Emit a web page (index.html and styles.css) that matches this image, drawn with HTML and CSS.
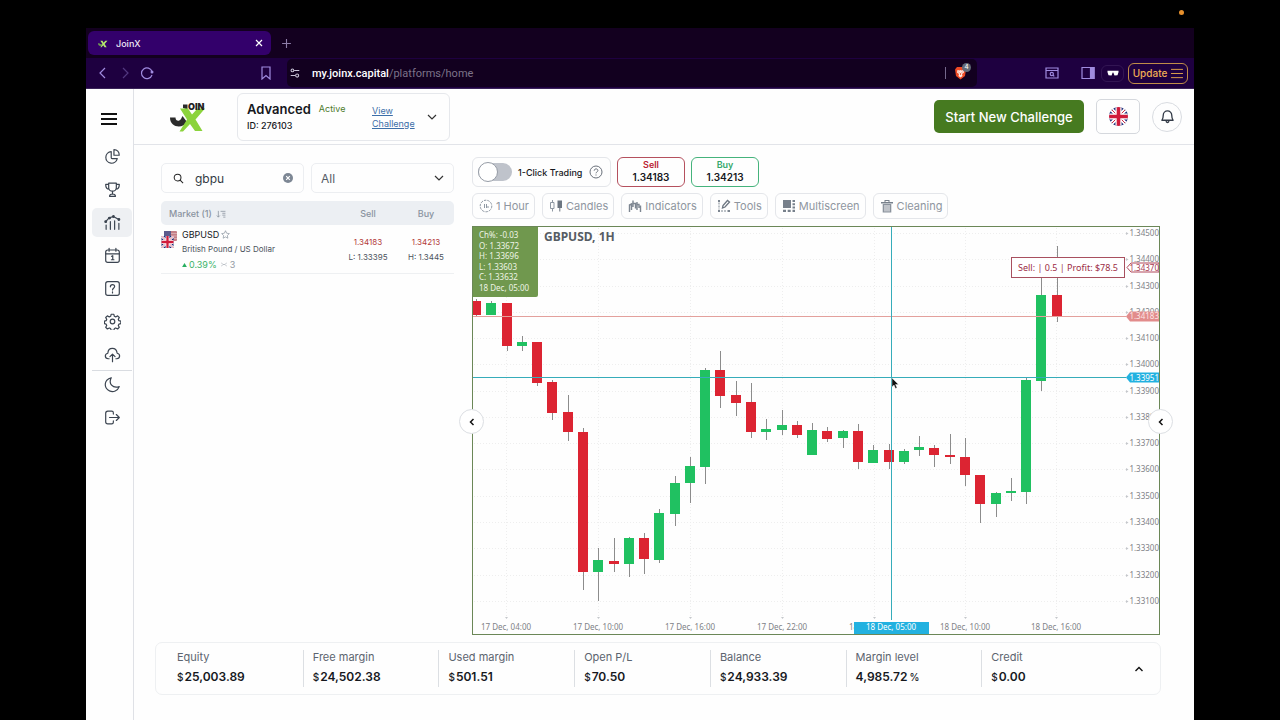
FILE: index.html
```html
<!DOCTYPE html>
<html lang="en">
<head>
<meta charset="utf-8">
<title>JoinX</title>
<link rel="stylesheet" href="styles.css">
</head>
<body>
<svg class="defs" width="0" height="0" aria-hidden="true">
  <symbol id="uk" viewBox="0 0 20 20">
    <rect width="20" height="20" fill="#1b2a78"/>
    <path d="M0 0l20 20M20 0L0 20" stroke="#fff" stroke-width="4"/>
    <path d="M0 0l20 20M20 0L0 20" stroke="#c8203c" stroke-width="1"/>
    <path d="M10 0v20M0 10h20" stroke="#fff" stroke-width="6.4"/>
    <path d="M10 0v20M0 10h20" stroke="#d01c3c" stroke-width="3.8"/>
  </symbol>
  <symbol id="logo-x" viewBox="0 0 38 30">
    <path d="M0 15.500h5.500c0 3.500 3.500 4.500 5.500 1.500l1.500-3L17 20C13 27 0 26 0 15.500z" fill="#2b2b2b"/>
    <path d="M13 2.500h4.500v5L13 6z" fill="#2b2b2b"/>
    <path d="M10 6.500h8l4 6 5.500-6H35L25.500 17.500l7 11.500H25l-5-7-7 7.500H9.500L17 17.500z" fill="#8bd33c"/>
  </symbol>
</svg>
<div class="camera-dot"></div>
<div class="window">
  <div class="tabs">
    <div class="tab">
      <svg class="favicon" viewBox="0 0 38 30"><path d="M0 14h6c0 4 4 5 6 2l4 5C11 27 0 25 0 14z" fill="#6d9a53"/><path d="M9 5h8l4 7 7-7h8L25 17l8 12h-8l-5-7-7 7H9l8-12z" fill="#b6ec6c"/></svg>
      <span>JoinX</span>
      <button class="tab-close" aria-label="Close tab"><svg viewBox="0 0 8 8"><path d="M1 1l6 6M7 1L1 7" stroke="#fff" stroke-width="1.200"/></svg></button>
    </div>
    <button class="tab-new" aria-label="New tab"><svg viewBox="0 0 10 10"><path d="M5 1v8M1 5h8" stroke="#8d7da8" stroke-width="1"/></svg></button>
  </div>
  <div class="toolbar">
    <button class="tool" aria-label="Back"><svg viewBox="0 0 14 14"><path d="M9 2L4 7l5 5"/></svg></button>
    <button class="tool dim" aria-label="Forward"><svg viewBox="0 0 14 14"><path d="M5 2l5 5-5 5"/></svg></button>
    <button class="tool" aria-label="Reload"><svg viewBox="0 0 14 14"><path d="M12 5.500A5.400 5.400 0 1 0 12 9"/><circle cx="12" cy="6" r="1.500" fill="#a08be0" stroke="none"/></svg></button>
    <button class="tool bookmark" aria-label="Bookmark"><svg viewBox="0 0 14 14"><path d="M3 1h8v12l-4-3.500L3 13z"/></svg></button>
    <div class="address">
      <svg viewBox="0 0 14 14"><g fill="none" stroke="#c9c2d6" stroke-width="1.200"><circle cx="4" cy="4" r="1.600"/><path d="M6 4h6M2 10h5"/><circle cx="9.500" cy="10" r="1.800"/></g></svg>
      <p><b>my.joinx.capital</b>/platforms/home</p>
      <span class="bar"></span>
      <span class="shield"><svg viewBox="0 0 12 14"><path d="M2.500 1h7l2 2.500-1 6.500L6 13.500 1.500 10l-1-6.500z" fill="#ee4a25"/><path d="M3 4l2 .5L6 4l1 .5L9 4l.5 2.500L7.500 8 8 10l-2 1.500L4 10l.5-2L2.500 6.500z" fill="#fbe8e2"/><path d="M4 6l1 .8M8 6l-1 .8M6 7v2" stroke="#ee4a25" stroke-width=".8"/></svg><i>4</i></span>
    </div>
    <button class="tool find" aria-label="Search page"><svg viewBox="0 0 14 14"><path d="M1 2h12v10H1zM1 4.500h12"/><circle cx="6.800" cy="8" r="1.600"/><path d="M8 9.200l1.300 1.200"/></svg></button>
    <button class="tool side" aria-label="Side panel"><svg viewBox="0 0 14 14"><path d="M1 1.500h12v11H1z"/><path d="M9.500 1.500H13v11H9.500z" fill="#a08be0"/></svg></button>
    <span class="private"><svg viewBox="0 0 12 6"><path d="M.5.700h11v1.500l-1 3-3 .3L6.300 2.500h-.6L4.500 5.500l-3-.3-1-3z" fill="#fff"/></svg></span>
    <button class="update">Update<svg viewBox="0 0 13 12"><path d="M0 1.500h13M0 6h13M0 10.500h13" stroke="#e9a84c" stroke-width="1"/></svg></button>
  </div>

  <div class="app">
    <nav class="sidebar" aria-label="Main">
      <button class="burger" aria-label="Menu"><svg viewBox="0 0 16 14"><path d="M0 2h16M0 7h16M0 12h16" stroke="#111" stroke-width="2"/></svg></button>
      <a href="#" aria-label="Overview"><svg viewBox="0 0 20 20"><path d="M8.500 4.300A6.800 6.800 0 1 0 15.600 12.500H9.500a1 1 0 0 1-1-1z"/><path d="M11.700 2v6.500h6.200C18 4.500 15.500 2 11.700 2z"/></svg></a>
      <a href="#" aria-label="Challenges"><svg viewBox="0 0 20 20"><path d="M5.500 2.500h9v5c0 6-9 6-9 0zM5.500 4H2c0 3.500 1 5.500 4.200 5.700M14.500 4H18c0 3.500-1 5.500-4.200 5.700M10 12v3.500M6.500 18c0-2 1-2.700 3.500-2.700s3.500.700 3.500 2.700z"/></svg></a>
      <a href="#" class="active" aria-label="Trading"><svg viewBox="0 0 20 20"><path d="M2 9l4-4.500 5-1.500 6.500 3.500"/><path d="M2.500 13v5M7.500 9v9M12.500 8v10M17.500 11v7"/><g fill="#3b4450"><circle cx="2" cy="9" r="1"/><circle cx="6.500" cy="4.800" r="1"/><circle cx="11" cy="3" r="1"/><circle cx="17.500" cy="6.500" r="1"/></g></svg></a>
      <a href="#" aria-label="Calendar"><svg viewBox="0 0 20 20"><rect x="2" y="3.500" width="16" height="14.500" rx="2.500"/><path d="M2 8h16M6 1.500V5M14 1.500V5M9 11l1.300-.8V15M8.700 15h3"/></svg></a>
      <a href="#" aria-label="Help"><svg viewBox="0 0 20 20"><rect x="2" y="2" width="16" height="16" rx="2.500"/><path d="M7.500 8c0-3.500 5-3.200 5-.3 0 2-2.500 2-2.500 4M10 14v1.200"/></svg></a>
      <a href="#" aria-label="Settings"><svg viewBox="0 0 20 20"><circle cx="10" cy="10" r="2.700"/><path d="M8.400 1.500h3.200l.6 2.400 1.600.7 2.200-1.300 2 2-1.200 2.200.7 1.500 2.300.6v2.900l-2.300.6-.7 1.500 1.200 2.200-2 2-2.200-1.200-1.600.7-.6 2.200H8.400l-.6-2.200-1.600-.7L4 18.800l-2-2 1.200-2.200-.7-1.500-2-.6V9.600l2-.6.7-1.500L2 5.300l2-2 2.200 1.300 1.600-.7z"/></svg></a>
      <a href="#" aria-label="Upload"><svg viewBox="0 0 20 20"><path d="M6 15H5C.5 14.500.5 9.500 4.500 8.500 5 1 14.500 1 15.500 8.500c4 1 3.800 6-.5 6.500h-1M10 18.500V10M7 12.500l3-3 3 3"/></svg></a>
      <hr>
      <a href="#" aria-label="Dark mode"><svg viewBox="0 0 20 20"><path d="M8.500 2C5 9 10 15 18 12.500 16 17.500 11 19.500 6.500 17.500-.5 14-.5 4.500 8.500 2z"/></svg></a>
      <a href="#" aria-label="Log out"><svg viewBox="0 0 20 20"><path d="M11 6V4.500c0-1.500-.7-2-2-2H4.500c-1.700 0-2.500.8-2.500 2.500v10c0 1.700.8 2.500 2.500 2.500H9c1.300 0 2-.5 2-2V14M6.500 10H18M14.500 6.500L18 10l-3.500 3.500"/></svg></a>
    </nav>

    <div class="page">
      <header class="header">
        <svg class="logo" viewBox="0 0 38 30" role="img" aria-label="JoinX"><use href="#logo-x"/><text x="18" y="8">OIN</text></svg>
        <section class="account">
          <div class="account-main">
            <p class="plan"><strong>Advanced</strong><span>Active</span></p>
            <p class="account-id">ID: 276103</p>
          </div>
          <a href="#">View Challenge</a>
          <button aria-label="Switch account"><svg class="chev" viewBox="0 0 10 6"><path d="M1 1l4 4 4-4"/></svg></button>
        </section>
        <button class="start">Start New Challenge</button>
        <button class="lang" aria-label="Language"><svg viewBox="0 0 20 20"><use href="#uk"/></svg></button>
        <button class="bell" aria-label="Notifications"><svg viewBox="0 0 16 16"><path d="M3.500 6.500a4.500 4.500 0 0 1 9 0c0 3 .5 4 1.500 5.500H2c1-1.500 1.500-2.500 1.500-5.500zM6.500 12.500c0 2.500 3 2.500 3 0"/></svg></button>
      </header>

      <main class="workspace">
        <section class="market">
          <div class="filters">
            <label class="search"><svg viewBox="0 0 12 12"><circle cx="5" cy="5" r="3.700"/><path d="M7.800 7.800L11 11"/></svg>
              <input type="text" value="gbpu" aria-label="Search market">
              <button aria-label="Clear"><svg viewBox="0 0 10 10"><circle cx="5" cy="5" r="5" fill="#7d8794"/><path d="M3.200 3.200l3.600 3.600M6.800 3.200L3.200 6.800" stroke="#fff" stroke-width="1.200"/></svg></button>
            </label>
            <label class="select"><select aria-label="Category"><option>All</option></select><svg class="chev" viewBox="0 0 10 6"><path d="M1 1l4 4 4-4"/></svg></label>
          </div>
          <table>
            <thead><tr><th>Market (1) <svg viewBox="0 0 11 9"><path d="M2.500 1v7M.8 6.200L2.500 8l1.700-1.800M5 1.500h5.500M7 3.700h3.500M7 5.800h3.500M8 8h2.500" fill="none" stroke="#8a93a0" stroke-width=".9"/></svg></th><th>Sell</th><th>Buy</th></tr></thead>
            <tbody><tr>
              <td><div class="pair">
                <svg class="flags" viewBox="0 0 16 17"><rect x="3" width="13" height="10" rx="1" fill="#c47f88"/><path d="M3 2.500h13M3 5h13M3 7.500h13" stroke="#d8a9ae" stroke-width="1"/><rect x="3" width="7" height="6" fill="#5b5a8c"/><use href="#uk" x="0" y="5" width="13" height="12"/></svg>
                <div><p class="symbol">GBPUSD<svg viewBox="0 0 10 10"><path d="M5 .8l1.300 2.800 3 .4-2.200 2.100.5 3L5 7.700 2.400 9.100l.5-3L.7 4l3-.4z" fill="none" stroke="#7d8794" stroke-width=".7"/></svg></p>
                <p class="desc">British Pound / US Dollar</p>
                <p class="change"><svg viewBox="0 0 6 5"><path d="M3 0l3 5H0z" fill="#27ae60"/></svg><b>0.39%</b><svg class="spread" viewBox="0 0 6 5"><path d="M0 .5l2 2-2 2M6 .5l-2 2 2 2M2 2.500h2" fill="none" stroke="#b0b6be" stroke-width=".8"/></svg>3</p></div>
              </div></td>
              <td><p class="price">1.34183</p><p class="limit">L: 1.33395</p></td>
              <td><p class="price">1.34213</p><p class="limit">H: 1.3445</p></td>
            </tr></tbody>
          </table>
        </section>

        <section class="trading">
          <div class="row order-row">
            <div class="one-click"><input type="checkbox" id="oneclick" class="switch"><label for="oneclick">1-Click Trading</label><svg viewBox="0 0 14 14"><circle cx="7" cy="7" r="6"/><path d="M5.200 5.700c0-2.500 3.700-2.300 3.700-.2 0 1.400-1.900 1.400-1.900 2.800M7 9.500v1"/></svg></div>
            <button class="quote sell"><span>Sell</span>1.34183</button>
            <button class="quote buy"><span>Buy</span>1.34213</button>
          </div>
          <div class="row chart-tools">
            <button><svg viewBox="0 0 14 14"><circle cx="7" cy="7" r="5.800" fill="none" stroke="#8f98a3" stroke-dasharray="2.500 1"/><path d="M5.500 5v4M7.500 5v4M9 7v2" stroke="#8f98a3"/></svg>1 Hour</button>
            <button><svg viewBox="0 0 14 14"><path d="M3.500 1v2M3.500 10v2.500M1.500 3.500h3.500v6H1.500z" fill="none" stroke="#8f98a3"/><path d="M8.500 1.500h4.500v7.500h-1.700v3.500h-1V9H8.500z" fill="#6d7681"/></svg>Candles</button>
            <button><svg viewBox="0 0 14 14"><path d="M1.500 13V6l2-1v6M5 1.500V8M5 4.500h2.500v5M9 3v8M9 5.500h2V9M12.500 6.500v6.500" fill="none" stroke="#7d8691" stroke-width="1.400"/></svg>Indicators</button>
            <button><svg viewBox="0 0 14 14"><path d="M2 3.500v7M4 12h8" stroke="#7d8691" stroke-dasharray="2 1"/><path d="M1 1h2v2H1zM1 11h2v2H1zM11 11h2v2h-2z" fill="#7d8691"/><path d="M5.500 9L6 6.500 10.500 1.500l2 1.500L8 8z" fill="none" stroke="#6d7681" stroke-width="1.300"/></svg>Tools</button>
            <button><svg viewBox="0 0 14 14"><path d="M1 1h8v8H1zM10.500 1H13v2h-2.500zM10.500 4.200H13v2h-2.500zM10.500 7.400H13v2h-2.500zM1 10.700h3V13H1zM5.700 10.700h3V13h-3zM10.500 10.700H13V13h-2.500z" fill="#77808b"/></svg>Multiscreen</button>
            <button><svg viewBox="0 0 14 14"><path d="M1 3h12v1.500H1zM4.500 1h5v2h-1V2h-3v1h-1z" fill="#77808b"/><path d="M2.700 5h8.600v8.500H2.700z" fill="#8b939d"/><path d="M5 6v6.500M7 6v6.500M9 6v6.500" stroke="#fff" stroke-width=".9"/></svg>Cleaning</button>
          </div>
          <div class="chart-wrap">
            <svg class="chart" id="chart" viewBox="0 0 688 409" role="img" aria-label="GBPUSD, 1H candlestick chart"></svg>
            <button class="slide left" aria-label="Collapse market list"><svg viewBox="0 0 6 8"><path d="M4.500 1L1.500 4l3 3"/></svg></button>
            <button class="slide right" aria-label="Open order panel"><svg viewBox="0 0 6 8"><path d="M4.500 1L1.500 4l3 3"/></svg></button>
          </div>
        </section>
      </main>

      <footer class="stats">
        <dl>
          <div><dt>Equity</dt><dd><small>$</small>25,003.89</dd></div>
          <div><dt>Free margin</dt><dd><small>$</small>24,502.38</dd></div>
          <div><dt>Used margin</dt><dd><small>$</small>501.51</dd></div>
          <div><dt>Open P/L</dt><dd><small>$</small>70.50</dd></div>
          <div><dt>Balance</dt><dd><small>$</small>24,933.39</dd></div>
          <div><dt>Margin level</dt><dd>4,985.72<small class="unit">%</small></dd></div>
          <div><dt>Credit</dt><dd><small>$</small>0.00</dd></div>
        </dl>
        <button aria-label="Expand"><svg viewBox="0 0 10 6"><path d="M1.500 5L5 1.500 8.500 5"/></svg></button>
      </footer>
    </div>
  </div>
</div>
<script src="chart.js"></script>
</body>
</html>
```

FILE: chart.js
```js
// Plot geometry, in chart units.
const FIRST_X = 4, STEP = 15.28, BODY = 10;
const TOP_PRICE = 1.345, TOP_Y = 7, PER_LABEL = 26.27;

// direction, body top, body bottom, high, low
const candles = [
  ['d', 75, 89, 73, 91], ['u', 77, 89, 75, 89], ['d', 77, 120, 77, 125],
  ['u', 116, 120, 110, 125], ['d', 116, 157, 116, 160], ['d', 156, 187, 154, 194],
  ['d', 186, 206, 169, 215], ['d', 206, 346, 202, 364], ['u', 334, 346, 322, 375],
  ['d', 335, 338, 312, 346], ['u', 312, 338, 311, 351], ['d', 312, 333, 307, 348],
  ['u', 287, 334, 283, 337], ['u', 257, 288, 250, 300], ['u', 240, 257, 231, 277],
  ['u', 144, 241, 142, 258], ['d', 144, 170, 125, 182], ['d', 169, 177, 155, 190],
  ['d', 176, 206, 157, 212], ['u', 203, 206, 193, 214], ['u', 199, 204, 184, 209],
  ['d', 199, 209, 195, 212], ['u', 204, 229, 197, 229], ['d', 205, 213, 201, 216],
  ['u', 205, 212, 204, 222], ['d', 205, 236, 198, 243], ['u', 224, 237, 219, 237],
  ['d', 224, 236, 218, 243], ['u', 225, 236, 223, 238], ['u', 221, 224, 210, 230],
  ['d', 222, 229, 219, 241], ['d', 229, 231, 208, 238], ['d', 231, 249, 212, 260],
  ['d', 249, 278, 249, 297], ['u', 267, 278, 266, 291], ['u', 265, 267, 252, 275],
  ['u', 154, 266, 151, 278], ['u', 69, 155, 31, 165], ['d', 69, 91, 20, 96]
];
const times = [['17 Dec, 04:00', 34], ['17 Dec, 10:00', 126], ['17 Dec, 16:00', 218],
  ['17 Dec, 22:00', 310], ['18 Dec, 04:00', 402], ['18 Dec, 10:00', 493], ['18 Dec, 16:00', 584]];

const out = [];
const text = (x, y, s, cls, anchor) =>
  out.push(`<text x="${x}" y="${y}" class="${cls}" text-anchor="${anchor || 'start'}">${s}</text>`);
const line = (x1, y1, x2, y2, cls) =>
  out.push(`<path d="M${x1} ${y1}L${x2} ${y2}" class="${cls}"/>`);

for (let i = 0; i < 15; i++) {
  const y = Math.round(TOP_Y + i * PER_LABEL);
  line(2, y + 0.5, 654, y + 0.5, 'grid');
  out.push(`<path d="M654 ${y - 1}l2.500 1.500-2.500 1.500z" class="tick"/>`);
  text(687, y + 3, (TOP_PRICE - i / 1000).toFixed(5), 'axis', 'end');
}
for (const [label, x] of times) {
  line(x + 0.5, 2, x + 0.5, 392, 'grid');
  out.push(`<path d="M${x - 1} 391h3l-1.500 2z" class="tick"/>`);
  text(x, 404, label, 'axis', 'middle');
}
candles.forEach(([dir, top, bottom, high, low], i) => {
  const x = Math.round(FIRST_X + i * STEP);
  const left = Math.max(1, x - BODY / 2);
  line(x + 0.5, high, x + 0.5, low, 'wick');
  out.push(`<rect x="${left}" y="${top}" width="${x + BODY / 2 - left}" height="${bottom - top}" class="${dir === 'u' ? 'up' : 'down'}"/>`);
});

line(1, 90.5, 654, 90.5, 'last');
line(1, 151.5, 654, 151.5, 'crosshair');
line(419.5, 0, 419.5, 394, 'crosshair');
out.push('<path d="M654 90.500l4-5h29v10h-29z" class="tag-last"/>');
text(687, 93, '1.34183', 'axis light', 'end');
out.push('<path d="M654 151.500l4-5h29v10h-29z" class="tag-cross"/>');
text(687, 155, '1.33951', 'axis white', 'end');
out.push('<path d="M655 41.500l4-4.500h28v9h-28z" class="tag-order"/>');
text(687, 45, '1.34370', 'axis maroon', 'end');
out.push('<rect x="539.500" y="31.500" width="113" height="20" class="order"/>');
text(596, 45, 'Sell: | 0.5 | Profit: $78.5', 'order-text', 'middle');
out.push('<rect x="382" y="396" width="75" height="12" class="tag-cross"/>');
text(419, 404, '18 Dec, 05:00', 'axis white', 'middle');

out.push('<path d="M0 0h66v69q0 2-2 2H0z" class="ohlc"/>');
['Ch%: -0.03', 'O: 1.33672', 'H: 1.33696', 'L: 1.33603', 'C: 1.33632', '18 Dec, 05:00']
  .forEach((s, i) => text(7, 12 + Math.round(i * 10.5), s, 'ohlc-text'));
text(72, 15, 'GBPUSD, 1H', 'title');
out.push('<rect x="0.500" y="0.500" width="687" height="408" class="frame"/>');
out.push('<path d="M420 152v9l2-2 1.500 3.500 1.500-.7-1.500-3.300h3z" class="pointer"/>');
document.getElementById('chart').innerHTML = out.join('');
```

FILE: styles.css
```css
* { box-sizing: border-box; }
body { margin: 0; background: #000; font-family: Inter, "Liberation Sans", sans-serif; color: #16181d; }
p, dl, dd { margin: 0; }
button { font: inherit; color: inherit; background: none; border: 0; padding: 0; display: flex; align-items: center; justify-content: center; cursor: pointer; }
svg { display: block; flex: none; }
a { color: inherit; }
.defs { position: absolute; }

.camera-dot { position: absolute; top: 10px; right: 96px; width: 5px; height: 5px; border-radius: 50%; background: #e8912d; }
.window { margin: 0 86px; padding-top: 28px; min-height: 100vh; display: flex; flex-direction: column; }

/* Browser chrome */
.tabs { display: flex; align-items: center; height: 30px; padding-left: 2px; background: #13001f; }
.tab { display: flex; align-items: center; gap: 8px; width: 183px; height: 24px; padding: 0 8px 0 10px; border-radius: 6px; background: #33006b; color: #efe9f8; font-size: 9px; font-weight: 500; }
.tab span { flex: 1; }
.favicon { width: 10px; height: 9px; }
.tab-close svg { width: 8px; height: 8px; }
.tab-new { margin-left: 10px; }
.tab-new svg { width: 11px; height: 11px; }
.toolbar { display: flex; align-items: center; height: 31px; padding: 0 6px 0 10px; background: #1e0040; border-bottom: 1px solid #3a2358; }
.tool svg { width: 14px; height: 14px; fill: none; stroke: #a08be0; stroke-width: 1.2; }
.tool + .tool { margin-left: 8px; }
.tool.dim { opacity: .4; }
.tool + .tool.bookmark { margin-left: 105px; }
.address { flex: 1; display: flex; align-items: center; height: 28px; margin-left: 14px; padding: 0 4px 0 2px; border-radius: 5px; background: #12001f; color: #7d7389; font: 11px Roboto, sans-serif; }
.address > svg { width: 12px; height: 12px; margin-right: 11px; }
.address p { flex: 1; }
.address b { color: #fff; font-weight: 500; }
.bar { width: 1px; height: 12px; background: #75688c; }
.shield { position: relative; margin: 0 6px 0 8px; }
.shield svg { width: 13px; height: 14px; }
.shield i { position: absolute; top: -3px; left: 8px; width: 9px; height: 9px; border-radius: 50%; background: #626a78; color: #fff; font-size: 7px; font-style: normal; line-height: 9px; text-align: center; }
.find { margin: 0 0 0 68px; }
.tool + .tool.side { margin-left: 22px; }
.private { display: flex; align-items: center; justify-content: center; width: 23px; height: 17px; margin: 0 4px 0 6px; border: 1px solid #321553; border-radius: 6px; }
.private svg { width: 12px; height: 6px; }
.update { gap: 4px; height: 21px; width: 60px; border: 1px solid #c08c48; border-radius: 6px; color: #f0ae54; font-size: 10px; font-weight: 500; }
.update svg { width: 12px; height: 11px; }

/* Application shell */
.app { flex: 1; display: flex; background: #fefefe; }
.sidebar { width: 48px; display: flex; flex-direction: column; align-items: center; gap: 4px; padding-left: 5px; border-right: 1px solid #dfe1e6; }
.burger { width: 40px; padding-right: 6px; height: 30px; margin: 15px 0 4px; }
.burger svg { width: 16px; height: 14px; }
.sidebar a { width: 40px; height: 29px; display: flex; align-items: center; justify-content: center; border-radius: 5px; }
.sidebar a.active { background: #eef0f3; }
.sidebar a svg { width: 17px; height: 17px; fill: none; stroke: #3b4450; stroke-width: 1.4; stroke-linecap: round; stroke-linejoin: round; }
.sidebar hr { width: 40px; margin: -3px 0 -5px; border: 0; border-top: 1px solid #d9dce1; }
.page { flex: 1; min-width: 0; display: flex; flex-direction: column; }

.header { display: flex; align-items: center; height: 56px; padding: 0 12px 0 36px; border-bottom: 1px solid #e2e4e9; }
.logo { width: 38px; height: 30px; margin-right: 29px; }
.logo text { font: 900 9px Inter, sans-serif; fill: #222; }
.account { display: flex; align-items: center; width: 213px; height: 48px; padding: 0 12px 0 9px; margin-right: auto; border: 1px solid #e6e8ec; border-radius: 6px; }
.account-main { flex: 1; padding-top: 1px; }
.plan { display: flex; align-items: center; gap: 8px; line-height: 18px; }
.plan strong { font-size: 13px; font-weight: 600; }
.plan span { color: #4c7a2a; font-size: 9px; }
.account-id { font-size: 9px; line-height: 16px; font-weight: 500; }
.account a { width: 46px; color: #3c6ea8; font-size: 9px; line-height: 13px; margin-right: 9px; }
.chev { width: 10px; height: 6px; fill: none; stroke: #333; stroke-width: 1.2; }
.start { width: 150px; height: 33px; border-radius: 5px; background: #467a20; color: #fff; font-size: 13px; font-weight: 500; }
.lang { width: 44px; height: 35px; margin: 0 12px; border: 1px solid #d5d8dd; border-radius: 5px; }
.lang svg { width: 19px; height: 19px; border-radius: 50%; }
.bell { width: 30px; height: 30px; border: 1px solid #d9dce1; border-radius: 50%; }
.bell svg { width: 15px; height: 15px; fill: none; stroke: #333b47; stroke-width: 1.4; stroke-linejoin: round; }

/* Workspace */
.workspace { flex: 1; display: grid; grid-template-columns: 293px minmax(0, 1fr); gap: 18px; padding: 12px 34px 7px 27px; }
.market { padding-top: 6px; }
.filters { display: grid; grid-template-columns: repeat(2, minmax(0, 1fr)); gap: 7px; margin-bottom: 8px; }
.search, .select { display: flex; align-items: center; height: 30px; border: 1px solid #eceef1; border-radius: 5px; padding: 0 10px; }
.select { padding: 0 9px; }
.search > svg { width: 11px; height: 11px; margin-left: 1px; fill: none; stroke: #222; stroke-width: 1.1; }
.search input { flex: 1; min-width: 0; margin-left: 11px; padding: 0; border: 0; outline: 0; background: none; font: 12px Inter, sans-serif; color: #333a44; }
.search button svg { width: 10px; height: 10px; }
.select select { flex: 1; min-width: 0; appearance: none; border: 0; padding: 0; background: none; font: 12px Inter, sans-serif; color: #555c66; }
table { width: 100%; table-layout: fixed; border-collapse: collapse; font-size: 8px; }
th { height: 24px; padding: 0; background: #eceff3; color: #8a93a0; font-size: 9px; font-weight: 500; }
th:first-child { text-align: left; padding-left: 8px; border-radius: 5px 0 0 5px; }
th:last-child { width: 56px; border-radius: 0 5px 5px 0; }
th:nth-child(2) { width: 60px; }
th svg { display: inline-block; width: 10px; height: 8px; margin-left: 2px; vertical-align: -1px; }
td { padding: 2px 0 0; height: 48px; text-align: center; line-height: 15px; border-bottom: 1px solid #eef0f2; }
.pair { display: flex; gap: 5px; text-align: left; }
.flags { width: 16px; height: 17px; margin-top: 4px; }
.symbol { display: flex; align-items: center; gap: 2px; font-size: 9px; }
.symbol svg { width: 9px; height: 9px; }
.desc, .limit { color: #4c535d; white-space: nowrap; }
.change { display: flex; align-items: center; gap: 2px; font-size: 9px; color: #9299a2; }
.change b { color: #3db36b; font-weight: 400; }
.change svg { width: 5px; height: 4px; }
.change .spread { width: 6px; height: 5px; margin: 0 1px 0 2px; }
.price { color: #b23a3a; }

.trading { min-width: 0; }
.row { display: flex; gap: 6px; }
.order-row { height: 30px; margin-bottom: 6px; }
.one-click { display: flex; align-items: center; gap: 6px; width: 139px; padding-left: 5px; border: 1px solid #e4e6ea; border-radius: 6px; font-size: 9px; font-weight: 500; }
.one-click svg { width: 14px; height: 14px; margin-left: 1px; fill: none; stroke: #6a717b; }
.switch { appearance: none; width: 34px; height: 18px; margin: 0; border-radius: 9px; background: #bfc3cb; display: flex; align-items: center; }
.switch::before { content: ""; width: 18px; height: 18px; border: 1px solid #969ca6; border-radius: 50%; background: #fff; }
.quote { width: 68px; flex-direction: column; padding-bottom: 2px; border: 1px solid; border-radius: 6px; font-size: 10px; line-height: 12px; font-weight: 600; color: #16181d; }
.quote span { font-size: 9px; }
.quote.sell { border-color: #b5505e; }
.sell span { color: #bb2433; }
.quote.buy { border-color: #45b37c; }
.buy span { color: #35a86b; }
.chart-tools { gap: 7px; margin-bottom: 7px; }
.chart-tools button { height: 26px; gap: 3px; padding: 0 5px 0 6px; border: 1px solid #e4e6ea; border-radius: 6px; color: #8f96a0; font-size: 11px; white-space: nowrap; }
.chart-tools svg { width: 14px; height: 14px; }
.chart-wrap { position: relative; }
.chart { width: 100%; height: auto; font-family: "Noto Sans", sans-serif; }
.slide { position: absolute; top: 48%; width: 25px; height: 25px; margin-top: -13px; border: 1px solid #dcdfe3; border-radius: 50%; background: #fff; }
.slide svg { width: 6px; height: 8px; fill: none; stroke: #111; stroke-width: 1.5; }
.slide.left { left: -13px; }
.slide.right { right: -13px; }

.frame { fill: none; stroke: #6b8757; }
.grid { fill: none; stroke: #eeeeee; stroke-dasharray: 1 2; }
.tick { fill: #c4c7cb; }
.axis { font-size: 8px; fill: #7e8287; }
.white { fill: #fff; }
.light { fill: #fbe5e5; }
.maroon { fill: #a53a52; }
.wick { stroke: #8c8c8c; }
.up { fill: #20c161; }
.down { fill: #dc2432; }
.last { stroke: #e3a09c; }
.crosshair { fill: none; stroke: #36acba; }
.tag-last { fill: #e28c8c; }
.tag-cross { fill: #22b1e0; }
.tag-order { fill: #fff; stroke: #b0475b; }
.order { fill: #fff; stroke: #a8505f; }
.order-text { font-size: 9px; fill: #9c2c44; }
.ohlc { fill: #70984e; }
.ohlc-text { font-size: 8px; fill: #edf4e5; }
.title { font-size: 12px; font-weight: 700; fill: #565c63; }
.pointer { fill: #111; stroke: #fff; stroke-width: .4; }

/* Account totals */
.stats { display: flex; margin: 0 33px 25px 21px; height: 53px; padding-left: 11px; border: 1px solid #eef0f2; border-radius: 7px; }
.stats dl { flex: 1; display: flex; align-items: center; }
.stats dl div { flex: 1; height: 37px; padding-left: 9px; border-left: 1px solid #dcdfe3; }
.stats dl div:first-child { border-color: transparent; }
dt { color: #5c646f; font-size: 11px; line-height: 15px; }
dd { font-size: 12px; font-weight: 600; line-height: 24px; }
dd small { font-size: 10px; font-weight: 500; margin-right: 1px; }
dd .unit { margin: 0 0 0 2px; }
.stats button { width: 43px; }
.stats button svg { width: 10px; height: 6px; fill: none; stroke: #111; stroke-width: 1.4; }
```
